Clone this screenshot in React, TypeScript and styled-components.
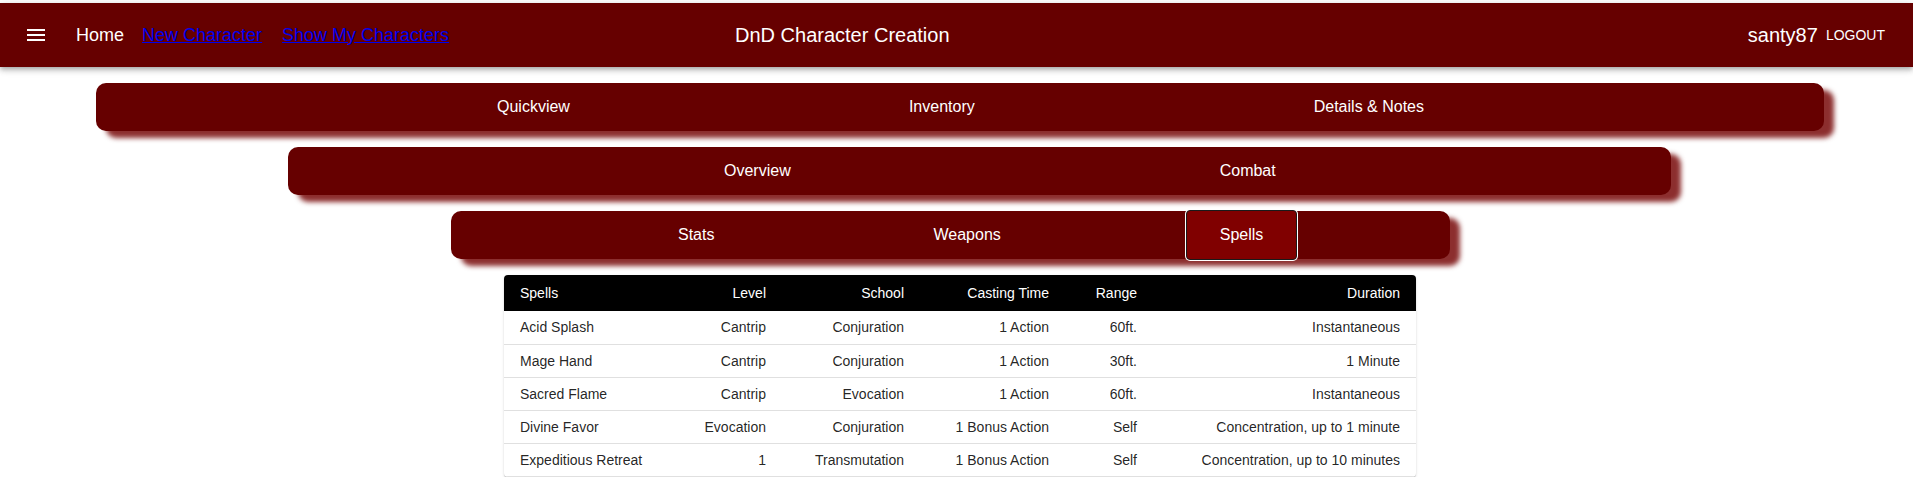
import React from "react";
import styled, { createGlobalStyle } from "styled-components";

const GlobalStyle = createGlobalStyle`
  html, body { margin: 0; padding: 0; background: #ffffff; }
  body { font-family: "Liberation Sans", Arial, sans-serif; }
  #root { width: 1913px; }
`;

const Page = styled.div`
  display: flex;
  flex-direction: column;
  align-items: flex-start;
  gap: 16px;
  padding-top: 3px;
`;

const AppBar = styled.header`
  position: relative;
  z-index: 1;
  align-self: stretch;
  height: 64px;
  box-sizing: border-box;
  background: #660000;
  color: #ffffff;
  display: flex;
  align-items: center;
  padding: 0 20px 0 24px;
  box-shadow: 0px 2px 4px -1px rgba(0, 0, 0, 0.2), 0px 4px 5px 0px rgba(0, 0, 0, 0.14),
    0px 1px 10px 0px rgba(0, 0, 0, 0.12);
`;

const LeftGroup = styled.div`
  flex: 0 0 711px;
  display: flex;
  align-items: center;
`;

const MenuButton = styled.button`
  width: 24px;
  height: 24px;
  padding: 0;
  margin-right: 28px;
  border: none;
  background: transparent;
  color: #ffffff;
  display: flex;
  cursor: pointer;
`;

const HomeLabel = styled.span`
  font-size: 18px;
  color: #ffffff;
  margin-right: 18px;
`;

const NavLink = styled.a`
  font-size: 18px;
  color: #0000ee;
  text-decoration: underline;
  margin-right: 20px;
`;

const Title = styled.h1`
  margin: 0;
  font-size: 20px;
  font-weight: 400;
  color: #ffffff;
`;

const Spacer = styled.div`
  flex: 1;
`;

const UserName = styled.span`
  font-size: 20px;
  color: #ffffff;
`;

const LogoutButton = styled.button`
  padding: 6px 8px;
  border: none;
  background: transparent;
  color: #ffffff;
  font-family: "Liberation Sans", Arial, sans-serif;
  font-size: 14px;
  letter-spacing: 0;
  text-transform: uppercase;
  cursor: pointer;
`;

const TabBar = styled.nav<{ $left: number; $width: number; $pad: number; $gap: number }>`
  margin-left: ${(p) => p.$left}px;
  width: ${(p) => p.$width}px;
  height: 48px;
  box-sizing: border-box;
  background: #660000;
  border-radius: 10px;
  box-shadow: 10px 7px 5px rgba(115, 0, 0, 0.82);
  display: flex;
  align-items: center;
  gap: ${(p) => p.$gap}px;
  padding-left: ${(p) => p.$pad}px;
`;

const Tab = styled.button<{ $active?: boolean }>`
  flex: none;
  height: 50px;
  padding: 0 33px;
  box-sizing: border-box;
  border: 1px solid ${(p) => (p.$active ? "#1a1a1a" : "transparent")};
  border-radius: 4px;
  background: ${(p) => (p.$active ? "#800000" : "transparent")};
  box-shadow: ${(p) => (p.$active ? "0 0 0 1px #ffffff" : "none")};
  color: #ffffff;
  font-family: "Liberation Sans", Arial, sans-serif;
  font-size: 16px;
  cursor: pointer;
`;

const TablePaper = styled.div`
  margin-left: 504px;
  width: 912px;
  border-radius: 4px;
  overflow: hidden;
  background: #ffffff;
  box-shadow: 0px 2px 1px -1px rgba(0, 0, 0, 0.2), 0px 1px 1px 0px rgba(0, 0, 0, 0.14),
    0px 1px 3px 0px rgba(0, 0, 0, 0.12);
`;

const SpellTable = styled.table`
  width: 100%;
  border-collapse: collapse;
  table-layout: fixed;
  font-size: 14px;
`;

const HeadRow = styled.tr`
  height: 36px;
  background: #000000;
`;

const HeadCell = styled.th<{ $align: "left" | "right" }>`
  padding: 0 16px;
  color: #ffffff;
  font-weight: 400;
  text-align: ${(p) => p.$align};
  white-space: nowrap;
`;

const BodyRow = styled.tr`
  height: 33px;
  border-bottom: 1px solid #e0e0e0;
`;

const Cell = styled.td<{ $align: "left" | "right" }>`
  padding: 0 16px;
  color: rgba(0, 0, 0, 0.87);
  text-align: ${(p) => p.$align};
  white-space: nowrap;
`;

const MenuIcon = () => (
  <svg width="24" height="24" viewBox="0 0 24 24" fill="currentColor">
    <path d="M3 18h18v-2H3v2zm0-5h18v-2H3v2zm0-7v2h18V6H3z" />
  </svg>
);

const columns: { label: string; width: number; align: "left" | "right" }[] = [
  { label: "Spells", width: 160, align: "left" },
  { label: "Level", width: 118, align: "right" },
  { label: "School", width: 138, align: "right" },
  { label: "Casting Time", width: 145, align: "right" },
  { label: "Range", width: 88, align: "right" },
  { label: "Duration", width: 263, align: "right" },
];

const spells = [
  ["Acid Splash", "Cantrip", "Conjuration", "1 Action", "60ft.", "Instantaneous"],
  ["Mage Hand", "Cantrip", "Conjuration", "1 Action", "30ft.", "1 Minute"],
  ["Sacred Flame", "Cantrip", "Evocation", "1 Action", "60ft.", "Instantaneous"],
  ["Divine Favor", "Evocation", "Conjuration", "1 Bonus Action", "Self", "Concentration, up to 1 minute"],
  ["Expeditious Retreat", "1", "Transmutation", "1 Bonus Action", "Self", "Concentration, up to 10 minutes"],
];

export default function App() {
  return (
    <>
      <GlobalStyle />
      <Page>
        <AppBar>
          <LeftGroup>
            <MenuButton aria-label="menu">
              <MenuIcon />
            </MenuButton>
            <HomeLabel>Home</HomeLabel>
            <NavLink href="#">New Character</NavLink>
            <NavLink href="#">Show My Characters</NavLink>
          </LeftGroup>
          <Title>DnD Character Creation</Title>
          <Spacer />
          <UserName>santy87</UserName>
          <LogoutButton>Logout</LogoutButton>
        </AppBar>

        <TabBar $left={96} $width={1728} $pad={367} $gap={271}>
          <Tab>Quickview</Tab>
          <Tab>Inventory</Tab>
          <Tab>Details &amp; Notes</Tab>
        </TabBar>

        <TabBar $left={288} $width={1383} $pad={402} $gap={361}>
          <Tab>Overview</Tab>
          <Tab>Combat</Tab>
        </TabBar>

        <TabBar $left={451} $width={999} $pad={193} $gap={151}>
          <Tab>Stats</Tab>
          <Tab>Weapons</Tab>
          <Tab $active>Spells</Tab>
        </TabBar>

        <TablePaper>
          <SpellTable>
            <colgroup>
              {columns.map((c) => (
                <col key={c.label} style={{ width: c.width }} />
              ))}
            </colgroup>
            <thead>
              <HeadRow>
                {columns.map((c) => (
                  <HeadCell key={c.label} $align={c.align}>
                    {c.label}
                  </HeadCell>
                ))}
              </HeadRow>
            </thead>
            <tbody>
              {spells.map((row) => (
                <BodyRow key={row[0]}>
                  {row.map((v, i) => (
                    <Cell key={i} $align={columns[i].align}>
                      {v}
                    </Cell>
                  ))}
                </BodyRow>
              ))}
            </tbody>
          </SpellTable>
        </TablePaper>
      </Page>
    </>
  );
}
